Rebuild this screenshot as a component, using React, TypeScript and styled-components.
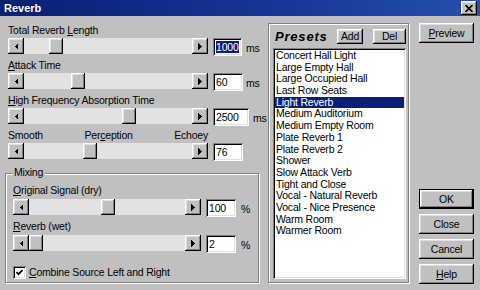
import React from "react";
import styled, { createGlobalStyle } from "styled-components";

const FACE = "#c0c0c0";
const NAVY = "#0a1f78";
const FONT = `"Liberation Sans", Arial, sans-serif`;

const raised = `box-shadow: inset -1px -1px #000, inset 1px 1px #fff, inset -2px -2px #808080, inset 2px 2px #dfdfdf;`;
const sunken = `box-shadow: inset 1px 1px #808080, inset -1px -1px #fff, inset 2px 2px #000, inset -2px -2px #dfdfdf;`;
const etched = `border: 1px solid #808080; box-shadow: inset 1px 1px #fff, 1px 1px #fff;`;

const GlobalStyle = createGlobalStyle`
  html, body { margin: 0; padding: 0; background: ${FACE}; }
  * { box-sizing: border-box; }
  #root { width: 480px; height: 290px; }
`;

const Window = styled.div`
  width: 480px;
  height: 290px;
  background: ${FACE};
  display: flex;
  flex-direction: column;
  overflow: hidden;
  font-family: ${FONT};
  font-size: 10.5px;
  letter-spacing: -0.2px;
  color: #000;
`;

const TitleBar = styled.div`
  height: 16px;
  flex: none;
  display: flex;
  align-items: center;
  justify-content: space-between;
  padding: 0 3px 0 4px;
  background: linear-gradient(90deg, #0a2070 0%, #16379a 60%, #2650ac 100%);
`;

const TitleText = styled.span`
  font-weight: bold;
  font-size: 11px;
  letter-spacing: 0;
  color: #fff;
  line-height: 16px;
`;

const CloseBox = styled.div`
  width: 16px;
  height: 14px;
  background: ${FACE};
  ${raised}
  display: flex;
  align-items: center;
  justify-content: center;
`;

const Body = styled.div`
  flex: 1;
  display: flex;
  padding: 6px 6px 6px 4px;
`;

const LeftCol = styled.div`
  width: 257px;
  flex: none;
  display: flex;
  flex-direction: column;
`;

const Section = styled.div`
  padding-left: 4px;
  display: flex;
  flex-direction: column;
`;

const Label = styled.div`
  height: 16px;
  line-height: 16px;
  white-space: nowrap;
`;

const TickLabels = styled.div`
  width: 200px;
  height: 16px;
  line-height: 16px;
  display: flex;
  justify-content: space-between;
  white-space: nowrap;
`;

const SliderRow = styled.div<{ $top?: number }>`
  display: flex;
  align-items: flex-start;
  height: 19px;
  margin-top: ${(p) => p.$top ?? 0}px;
`;

const Bar = styled.div<{ $w: number }>`
  width: ${(p) => p.$w}px;
  height: 16px;
  display: flex;
  flex: none;
`;

const ArrowBtn = styled.div`
  width: 16px;
  height: 16px;
  flex: none;
  background: ${FACE};
  ${raised}
  display: flex;
  align-items: center;
  justify-content: center;
`;

const Track = styled.div`
  flex: 1;
  position: relative;
  background: #e2e2e2;
`;

const Thumb = styled.div`
  position: absolute;
  top: 0;
  width: 14px;
  height: 16px;
  background: ${FACE};
  ${raised}
`;

const TextBox = styled.div<{ $w: number }>`
  width: ${(p) => p.$w}px;
  height: 18px;
  flex: none;
  margin-left: 5px;
  background: #fff;
  ${sunken}
  padding: 2px 3px 0;
  line-height: 14px;
  white-space: nowrap;
  overflow: hidden;
`;

const Sel = styled.span`
  background: ${NAVY};
  color: #fff;
`;

const Unit = styled.span<{ $gap: number }>`
  margin-left: ${(p) => p.$gap}px;
  margin-top: 2px;
  line-height: 16px;
`;

const GroupBox = styled.div`
  position: relative;
  margin: 11px 0 0 1px;
  width: 254px;
  ${etched}
  padding: 8px 0 3px 7px;
  display: flex;
  flex-direction: column;
`;

const GroupTitle = styled.span`
  position: absolute;
  top: -8px;
  left: 6px;
  padding: 0 2px;
  line-height: 13px;
  background: ${FACE};
`;

const CheckRow = styled.label`
  margin-top: 12px;
  display: flex;
  align-items: center;
  gap: 3px;
  line-height: 13px;
  white-space: nowrap;
`;

const CheckBox = styled.span`
  width: 13px;
  height: 13px;
  flex: none;
  background: #fff;
  ${sunken}
  display: flex;
  align-items: center;
  justify-content: center;
`;

const PresetsGroup = styled.div`
  width: 141px;
  height: 260px;
  flex: none;
  margin: 1px 0 0 7px;
  ${etched}
  padding: 5px 2px 3px 4px;
  display: flex;
  flex-direction: column;
`;

const PresetsHeader = styled.div`
  height: 15px;
  display: flex;
  align-items: center;
`;

const PresetsTitle = styled.span`
  flex: 1;
  margin-left: 2px;
  font-weight: bold;
  font-style: italic;
  font-size: 13px;
  letter-spacing: 0.8px;
  line-height: 15px;
`;

const Button = styled.div<{ $w?: number; $h?: number; $default?: boolean }>`
  width: ${(p) => (p.$w ? `${p.$w}px` : "100%")};
  height: ${(p) => p.$h ?? 20}px;
  flex: none;
  background: ${FACE};
  ${raised}
  ${(p) => (p.$default ? "border: 1px solid #000;" : "")}
  display: flex;
  align-items: center;
  justify-content: center;
  white-space: nowrap;
  line-height: 13px;
`;

const SmallBtn = styled(Button)<{ $ml?: number }>`
  margin-left: ${(p) => p.$ml ?? 0}px;
`;

const ListBox = styled.div`
  flex: 1;
  margin-top: 4px;
  background: #fff;
  ${sunken}
  padding: 2px;
  display: flex;
  flex-direction: column;
`;

const ListItem = styled.div<{ $sel?: boolean }>`
  height: 11.7px;
  line-height: 11.7px;
  padding-left: 1px;
  white-space: nowrap;
  background: ${(p) => (p.$sel ? NAVY : "transparent")};
  color: ${(p) => (p.$sel ? "#fff" : "#000")};
`;

const ButtonsCol = styled.div`
  width: 55px;
  flex: none;
  margin-left: 10px;
  padding-top: 1px;
  display: flex;
  flex-direction: column;
`;

const Spacer = styled.div`
  flex: 1;
`;

const BottomButtons = styled.div`
  display: flex;
  flex-direction: column;
  gap: 5px;
`;

const LeftArrow = () => (
  <svg width="4" height="7" viewBox="0 0 4 7" shapeRendering="crispEdges">
    <polygon points="4,0 0.5,3.5 4,7" fill="#000" />
  </svg>
);
const RightArrow = () => (
  <svg width="4" height="7" viewBox="0 0 4 7" shapeRendering="crispEdges">
    <polygon points="0,0 3.5,3.5 0,7" fill="#000" />
  </svg>
);

const ScrollBar: React.FC<{ width: number; value: number }> = ({ width, value }) => {
  const range = width - 32 - 14;
  return (
    <Bar $w={width}>
      <ArrowBtn>
        <LeftArrow />
      </ArrowBtn>
      <Track>
        <Thumb style={{ left: Math.round(value * range) }} />
      </Track>
      <ArrowBtn>
        <RightArrow />
      </ArrowBtn>
    </Bar>
  );
};

const presets = [
  "Concert Hall Light",
  "Large Empty Hall",
  "Large Occupied Hall",
  "Last Row Seats",
  "Light Reverb",
  "Medium Auditorium",
  "Medium Empty Room",
  "Plate Reverb 1",
  "Plate Reverb 2",
  "Shower",
  "Slow Attack Verb",
  "Tight and Close",
  "Vocal - Natural Reverb",
  "Vocal - Nice Presence",
  "Warm Room",
  "Warmer Room",
];

export default function App() {
  return (
    <>
      <GlobalStyle />
      <Window>
        <TitleBar>
          <TitleText>Reverb</TitleText>
          <CloseBox>
            <svg width="8" height="7" viewBox="0 0 8 7">
              <path d="M0.5 0 L7.5 7 M7.5 0 L0.5 7" stroke="#000" strokeWidth="1.6" />
            </svg>
          </CloseBox>
        </TitleBar>
        <Body>
          <LeftCol>
            <Section>
              <Label>
                Total Reverb <u>L</u>ength
              </Label>
              <SliderRow>
                <ScrollBar width={200} value={0.16} />
                <TextBox $w={29}>
                  <Sel>1000</Sel>
                </TextBox>
                <Unit $gap={4}>ms</Unit>
              </SliderRow>
            </Section>
            <Section>
              <Label>
                <u>A</u>ttack Time
              </Label>
              <SliderRow>
                <ScrollBar width={200} value={0.305} />
                <TextBox $w={30}>60</TextBox>
                <Unit $gap={3}>ms</Unit>
              </SliderRow>
            </Section>
            <Section>
              <Label>
                <u>H</u>igh Frequency Absorption Time
              </Label>
              <SliderRow>
                <ScrollBar width={200} value={0.636} />
                <TextBox $w={36}>2500</TextBox>
                <Unit $gap={4}>ms</Unit>
              </SliderRow>
            </Section>
            <Section>
              <TickLabels>
                <span>Smooth</span>
                <span>
                  Per<u>c</u>eption
                </span>
                <span>Echoey</span>
              </TickLabels>
              <SliderRow>
                <ScrollBar width={200} value={0.383} />
                <TextBox $w={30}>76</TextBox>
              </SliderRow>
            </Section>
            <GroupBox>
              <GroupTitle>Mixing</GroupTitle>
              <Label>
                <u>O</u>riginal Signal (dry)
              </Label>
              <SliderRow $top={1}>
                <ScrollBar width={188} value={0.507} />
                <TextBox $w={30}>100</TextBox>
                <Unit $gap={5}>%</Unit>
              </SliderRow>
              <Label>
                <u>R</u>everb (wet)
              </Label>
              <SliderRow $top={1}>
                <ScrollBar width={188} value={0} />
                <TextBox $w={30}>2</TextBox>
                <Unit $gap={5}>%</Unit>
              </SliderRow>
              <CheckRow>
                <CheckBox>
                  <svg width="7" height="7" viewBox="0 0 7 7">
                    <path d="M0.5 3 L2.5 5.2 L6.5 1" stroke="#000" strokeWidth="1.7" fill="none" />
                  </svg>
                </CheckBox>
                <span>
                  <u>C</u>ombine Source Left and Right
                </span>
              </CheckRow>
            </GroupBox>
          </LeftCol>
          <PresetsGroup>
            <PresetsHeader>
              <PresetsTitle>Presets</PresetsTitle>
              <SmallBtn $w={26} $h={15}>
                Add
              </SmallBtn>
              <SmallBtn $w={33} $h={15} $ml={10}>
                Del
              </SmallBtn>
            </PresetsHeader>
            <ListBox>
              {presets.map((p) => (
                <ListItem key={p} $sel={p === "Light Reverb"}>
                  {p}
                </ListItem>
              ))}
            </ListBox>
          </PresetsGroup>
          <ButtonsCol>
            <Button>
              <u>P</u>review
            </Button>
            <Spacer />
            <BottomButtons>
              <Button $default>OK</Button>
              <Button>Close</Button>
              <Button>Cancel</Button>
              <Button>
                <u>H</u>elp
              </Button>
            </BottomButtons>
          </ButtonsCol>
        </Body>
      </Window>
    </>
  );
}
